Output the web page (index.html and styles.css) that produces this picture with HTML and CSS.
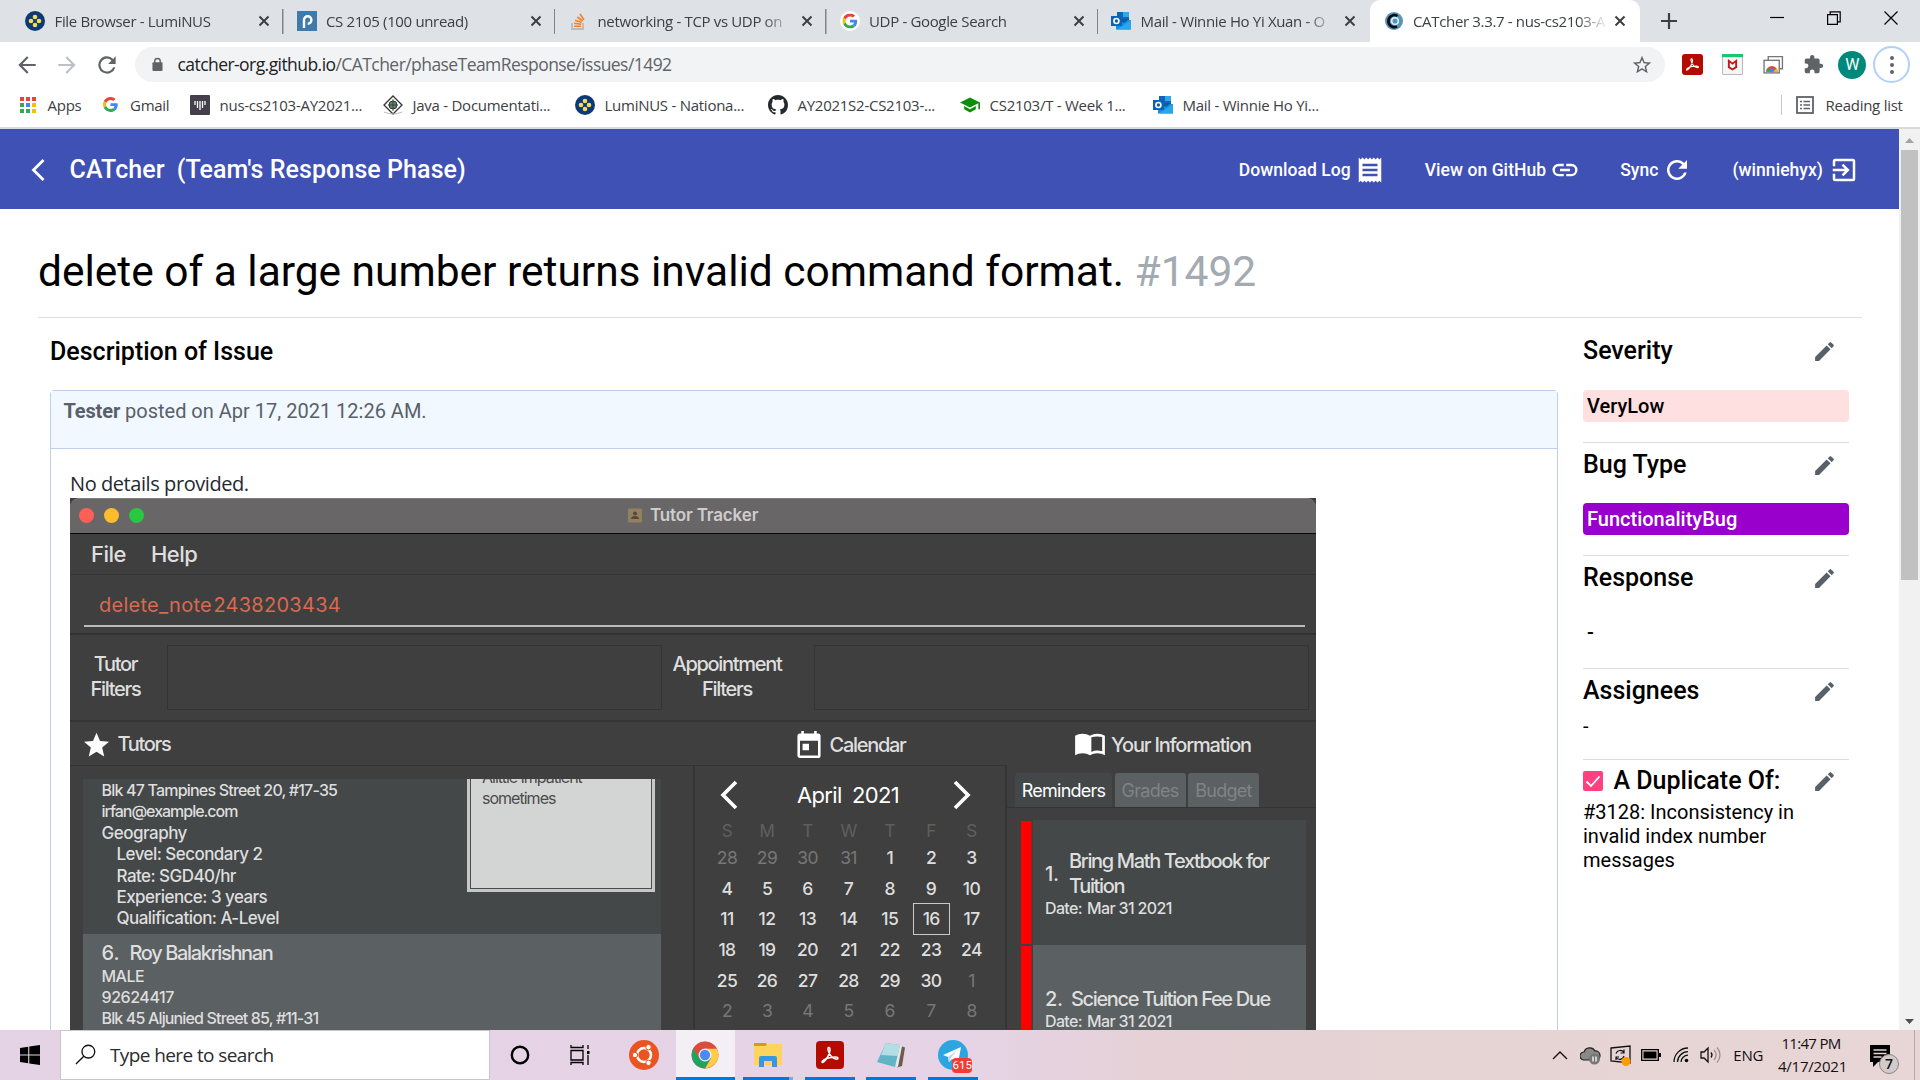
FILE: index.html
```html
<!DOCTYPE html>
<html lang="en">
<head>
<meta charset="utf-8">
<title>CATcher 3.3.7</title>
<link rel="stylesheet" href="styles.css">
</head>
<body>
<svg class="defs" aria-hidden="true">
  <symbol id="luminus" viewBox="0 0 20 20"><circle cx="10" cy="10" r="10" fill="#0b3a75"/><g fill="#f6dc5a"><circle cx="10" cy="6" r="2.3"/><circle cx="10" cy="14" r="2.3"/><circle cx="6" cy="10" r="2.3"/><circle cx="14" cy="10" r="2.3"/></g></symbol>
  <symbol id="google" viewBox="0 0 48 48"><path fill="#ea4335" d="M24 9.5c3.54 0 6.71 1.22 9.21 3.6l6.85-6.85C35.9 2.38 30.47 0 24 0 14.62 0 6.51 5.38 2.56 13.22l7.98 6.19C12.43 13.72 17.74 9.5 24 9.5z"/><path fill="#4285f4" d="M46.98 24.55c0-1.57-.15-3.09-.38-4.55H24v9.02h12.94c-.58 2.96-2.26 5.48-4.78 7.18l7.73 6c4.51-4.18 7.09-10.36 7.09-17.65z"/><path fill="#fbbc05" d="M10.53 28.59a14.5 14.5 0 0 1 0-9.18l-7.98-6.19a24 24 0 0 0 0 21.56l7.98-6.19z"/><path fill="#34a853" d="M24 48c6.48 0 11.93-2.13 15.89-5.81l-7.73-6c-2.15 1.45-4.92 2.3-8.16 2.3-6.26 0-11.57-4.22-13.47-9.91l-7.98 6.19C6.51 42.62 14.62 48 24 48z"/></symbol>
  <symbol id="outlook" viewBox="0 0 20 20"><path fill="#1066b5" d="M6 1h12v10H6z"/><path fill="#32a9e7" d="M12 1h6v5h-6z"/><path fill="#1490df" d="M5 9l15 0v9.500H5z"/><path fill="#28a8ea" d="M20 9v9.500L6 18.500z"/><path fill="#0f5ba0" d="M7 8h11l-5 4z"/><path fill="#0b62b8" d="M0 5h11v10H0z"/><circle cx="5.400" cy="10" r="2.500" fill="none" stroke="#fff" stroke-width="1.600"/></symbol>
  <symbol id="close" viewBox="0 0 12 12"><path d="M1.500 1.500l9 9M10.500 1.500l-9 9" stroke="#3c4043" stroke-width="2" fill="none"/></symbol>
  <symbol id="pencil" viewBox="0 0 24 24"><path fill="#586069" d="M3 17.250V21h3.750L17.810 9.940l-3.750-3.750L3 17.250zM20.710 7.040a1 1 0 0 0 0-1.410l-2.340-2.340a1 1 0 0 0-1.410 0l-1.830 1.830 3.750 3.750 1.830-1.830z"/></symbol>
  <symbol id="acrobat" viewBox="0 0 28 28"><rect width="28" height="28" rx="4" fill="#b30b00"/><path d="M12.500 6.500c2.200-.6 2 4.500-.6 9S6.500 22.500 6 21s3.500-3.500 7.500-4.300 8.500-1 8.500.6-4 .8-6.500-1.800-4.700-8.500-3-9z" fill="none" stroke="#fff" stroke-width="1.500"/></symbol>
</svg>

<div class="tabstrip">
  <div class="tab"><svg class="fav"><use href="#luminus"/></svg><span class="tab-title">File Browser - LumiNUS</span><svg class="x"><use href="#close"/></svg></div>
  <div class="tab"><svg class="fav" viewBox="0 0 20 20"><rect width="20" height="20" fill="#3e7aab"/><path d="M7 17V9a3.700 3.700 0 1 1 3.700 3.700" fill="none" stroke="#fff" stroke-width="2.400"/></svg><span class="tab-title">CS 2105 (100 unread)</span><svg class="x"><use href="#close"/></svg></div>
  <div class="tab"><svg class="fav" viewBox="0 0 20 20"><path d="M4 12v6h11v-6" fill="none" stroke="#bcbbbb" stroke-width="1.800"/><path d="M6 15.300h7M6.200 12.300l7 .9M7.200 9.200l6.500 2.300M9.300 6l5.500 4M12 3l4 5.700" stroke="#f48024" stroke-width="1.600"/></svg><span class="tab-title">networking - TCP vs UDP on</span><svg class="x"><use href="#close"/></svg></div>
  <div class="tab"><svg class="fav" viewBox="0 0 20 20"><circle cx="10" cy="10" r="10" fill="#fff"/><use href="#google" x="2.500" y="2.500" width="15" height="15"/></svg><span class="tab-title">UDP - Google Search</span><svg class="x"><use href="#close"/></svg></div>
  <div class="tab tab-last"><svg class="fav"><use href="#outlook"/></svg><span class="tab-title">Mail - Winnie Ho Yi Xuan - O</span><svg class="x"><use href="#close"/></svg></div>
  <div class="tab tab-active"><svg class="fav" viewBox="0 0 20 20"><circle cx="10" cy="10" r="9" fill="#5795b8"/><path d="M13.500 5A6 6 0 1 0 13 15.500" fill="none" stroke="#0b0b12" stroke-width="2.600"/><circle cx="11" cy="10" r="3.300" fill="none" stroke="#e6f2fa" stroke-width="1.500"/></svg><span class="tab-title">CATcher 3.3.7 - nus-cs2103-A</span><svg class="x"><use href="#close"/></svg></div>
  <svg class="newtab" viewBox="0 0 16 16"><path d="M8 0v16M0 8h16" stroke="#3c4043" stroke-width="2.200"/></svg>
  <div class="winbtns">
    <svg viewBox="0 0 14 14"><path d="M0 6.500h14" stroke="#000" stroke-width="1.200"/></svg>
    <svg viewBox="0 0 14 14"><path d="M.6 3.600h9.800v9.800H.6zM3.200 3.600V.8h10v10h-2.800" fill="none" stroke="#000" stroke-width="1.200"/></svg>
    <svg viewBox="0 0 14 14"><path d="M.5.5l13 13M13.500.5l-13 13" stroke="#000" stroke-width="1.200"/></svg>
  </div>
</div>

<div class="toolbar">
  <svg class="nav" viewBox="0 0 24 24"><path fill="#5f6368" d="M20 11H7.800l5.600-5.600L12 4l-8 8 8 8 1.400-1.400L7.800 13H20z"/></svg>
  <svg class="nav" viewBox="0 0 24 24"><path fill="#bdc1c6" d="M4 11h12.200l-5.600-5.600L12 4l8 8-8 8-1.400-1.400 5.600-5.600H4z"/></svg>
  <svg class="nav" viewBox="0 0 24 24"><path fill="#5f6368" d="M17.650 6.350A8 8 0 1 0 19.730 14h-2.080A6 6 0 1 1 12 6c1.660 0 3.140.69 4.220 1.780L13 11h7V4z"/></svg>
  <div class="omnibox">
    <svg class="lock" viewBox="0 0 12 15"><rect x=".5" y="5" width="11" height="9.500" rx="1" fill="#5f6368"/><path d="M3 6V4a3 3 0 0 1 6 0v2" fill="none" stroke="#5f6368" stroke-width="1.500"/></svg>
    <span class="url"><b>catcher-org.github.io</b>/CATcher/phaseTeamResponse/issues/1492</span>
    <svg class="star" viewBox="0 0 24 24"><path fill="#5f6368" d="M22 9.240l-7.190-.62L12 2 9.190 8.630 2 9.240l5.460 4.730L5.820 21 12 17.270 18.180 21l-1.630-7.030L22 9.240zM12 15.400l-3.760 2.270 1-4.280-3.320-2.880 4.380-.38L12 6.100l1.710 4.040 4.380.38-3.320 2.880 1 4.280L12 15.400z"/></svg>
  </div>
  <div class="exts">
    <svg><use href="#acrobat"/></svg>
    <svg viewBox="0 0 20 20"><rect x=".5" y=".5" width="19" height="19" rx="1" fill="#f6f6f6" stroke="#b9b9b9"/><path fill="#18c96b" d="M0 0h20v3H0z"/><path d="M6.500 6.500v6l3.500 2.200 3.500-2.200v-6L10 9.200z" fill="none" stroke="#c01818" stroke-width="1.800"/></svg>
    <svg viewBox="0 0 20 20"><path d="M5 6V2.500h13.500V14H16" fill="#fff" stroke="#777" stroke-width="1.300"/><rect x="1" y="6" width="14.500" height="12" fill="#fff" stroke="#777" stroke-width="1.300"/><path d="M3 17a5.500 5.500 0 0 1 11 0z" fill="#e94435"/><path d="M3 17a5.500 5.500 0 0 1 1.500-4L8 17z" fill="#34a853"/><path d="M14 17a5.500 5.500 0 0 0-1-3.500L9 17z" fill="#fbbc05"/><circle cx="8.500" cy="15.500" r="2" fill="#4285f4"/></svg>
    <svg viewBox="0 0 24 24"><path fill="#5f6368" d="M20.500 11H19V7a2 2 0 0 0-2-2h-4V3.500a2.500 2.500 0 0 0-5 0V5H4a2 2 0 0 0-2 2v3.800h1.500a2.700 2.700 0 0 1 0 5.400H2V20c0 1.100.9 2 2 2h3.800v-1.500a2.700 2.700 0 0 1 5.400 0V22H17a2 2 0 0 0 2-2v-4h1.500a2.500 2.500 0 0 0 0-5z"/></svg>
    <span class="avatar">W</span>
    <span class="kebab"><i></i><i></i><i></i></span>
  </div>
</div>

<div class="bookmarks">
  <span class="bm bm-apps"><svg viewBox="0 0 16 16"><g fill="#ea4335"><path d="M0 0h4v4H0zM6 0h4v4H6zM12 0h4v4h-4z"/></g><path fill="#34a853" d="M0 6h4v4H0zM0 12h4v4H0z"/><path fill="#4285f4" d="M6 6h4v4H6z"/><path fill="#34a853" d="M6 12h4v4H6z"/><path fill="#fbbc05" d="M12 6h4v4h-4zM12 12h4v4h-4z"/></svg>Apps</span>
  <span class="bm bm-gmail"><svg><use href="#google"/></svg>Gmail</span>
  <span class="bm"><svg viewBox="0 0 20 20"><rect width="20" height="20" rx="1" fill="#443f4a"/><path d="M5 6v4M7.500 6v7M10 6v9M12.500 6v7M15 6v4" stroke="#fff" stroke-width="1.300"/></svg>nus-cs2103-AY2021...</span>
  <span class="bm"><svg viewBox="0 0 20 20"><path d="M10 1l9 9-9 9-9-9z" fill="#fff" stroke="#333" stroke-width="1.300"/><circle cx="10" cy="10" r="4" fill="#5c8a6c" stroke="#333"/><path d="M10 4v12M5 10h10" stroke="#333" stroke-width=".8"/><path d="M1 17q9 4 18 0" stroke="#bbb" fill="none"/></svg>Java - Documentati...</span>
  <span class="bm"><svg><use href="#luminus"/></svg>LumiNUS - Nationa...</span>
  <span class="bm"><svg viewBox="0 0 16 16"><path fill="#24292e" d="M8 0C3.580 0 0 3.580 0 8c0 3.540 2.290 6.530 5.470 7.590.4.070.55-.17.55-.38 0-.19-.01-.82-.01-1.490-2.010.37-2.530-.49-2.690-.94-.09-.23-.48-.94-.82-1.130-.28-.15-.68-.52-.01-.53.63-.01 1.080.58 1.230.82.72 1.210 1.870.87 2.330.66.07-.52.28-.87.51-1.070-1.780-.2-3.640-.89-3.640-3.950 0-.87.31-1.590.82-2.150-.08-.2-.36-1.020.08-2.120 0 0 .67-.21 2.200.82.64-.18 1.320-.27 2-.27s1.360.09 2 .27c1.530-1.040 2.200-.82 2.200-.82.44 1.100.16 1.920.08 2.120.51.56.82 1.270.82 2.150 0 3.070-1.870 3.750-3.650 3.950.29.25.54.73.54 1.480 0 1.070-.01 1.930-.01 2.200 0 .21.15.46.55.38A8.010 8.010 0 0 0 16 8c0-4.420-3.580-8-8-8z"/></svg>AY2021S2-CS2103-...</span>
  <span class="bm"><svg viewBox="0 0 24 24"><path fill="#0a8f0a" d="M5 13.200v4L12 21l7-3.800v-4L12 17zM12 3L0 9l12 6 10-5v7h2V9z"/></svg>CS2103/T - Week 1...</span>
  <span class="bm"><svg><use href="#outlook"/></svg>Mail - Winnie Ho Yi...</span>
  <span class="bm reading"><svg viewBox="0 0 18 18"><rect x="1" y="1" width="16" height="16" fill="none" stroke="#5f6368" stroke-width="1.800"/><path d="M4 5.500h2M4 9h2M4 12.500h2M7.500 5.500H14M7.500 9H14M7.500 12.500H14" stroke="#5f6368" stroke-width="1.600"/></svg>Reading list</span>
</div>

<div class="viewport">
  <div class="page">
    <header class="appbar">
      <svg class="back" viewBox="0 0 14 22"><path d="M12.500 1L2.500 11l10 10" fill="none" stroke="#fff" stroke-width="2.800"/></svg>
      <span class="brand">CATcher</span><span class="phase">(Team's Response Phase)</span>
      <nav class="actions">
        <span class="action">Download Log<svg viewBox="0 0 24 24"><path fill="#fff" d="M18 17H6v-2h12v2zm0-4H6v-2h12v2zm0-4H6V7h12v2zM3 22l1.500-1.500L6 22l1.500-1.500L9 22l1.500-1.500L12 22l1.500-1.500L15 22l1.500-1.500L18 22l1.500-1.500L21 22V2l-1.500 1.500L18 2l-1.500 1.500L15 2l-1.500 1.500L12 2l-1.500 1.500L9 2 7.500 3.500 6 2 4.500 3.500 3 2v20z"/></svg></span>
        <span class="action">View on GitHub<svg viewBox="0 0 24 24"><path fill="#fff" d="M3.900 12A3.100 3.100 0 0 1 7 8.900h4V7H7a5 5 0 0 0 0 10h4v-1.900H7A3.100 3.100 0 0 1 3.900 12zM8 13h8v-2H8v2zm9-6h-4v1.900h4a3.100 3.100 0 0 1 0 6.200h-4V17h4a5 5 0 0 0 0-10z"/></svg></span>
        <span class="action">Sync<svg viewBox="0 0 24 24"><path fill="#fff" d="M17.650 6.350A8 8 0 1 0 19.730 14h-2.080A6 6 0 1 1 12 6c1.660 0 3.140.69 4.220 1.780L13 11h7V4z"/></svg></span>
        <span class="action last">(winniehyx)<svg viewBox="0 0 24 24"><path fill="#fff" d="M10.090 15.590L11.500 17l5-5-5-5-1.410 1.410L12.670 11H3v2h9.670l-2.580 2.590zM19 3H5a2 2 0 0 0-2 2v4h2V5h14v14H5v-4H3v4a2 2 0 0 0 2 2h14a2 2 0 0 0 2-2V5a2 2 0 0 0-2-2z"/></svg></span>
      </nav>
    </header>

    <h1 class="title">delete of a large number returns invalid command format. <span>#1492</span></h1>

    <div class="columns">
      <main class="issue">
        <h2>Description of Issue</h2>
        <article class="comment">
          <div class="comment-head"><strong>Tester</strong> posted on Apr 17, 2021 12:26 AM.</div>
          <div class="comment-body">
            <p>No details provided.</p>

            <div class="tracker">
              <div class="mac-bar">
                <span class="lights"><i class="red"></i><i class="yellow"></i><i class="green"></i></span>
                <span class="mac-title"><svg viewBox="0 0 14 14"><rect width="14" height="14" rx="1" fill="#93805e"/><circle cx="7" cy="5" r="2" fill="#54493a"/><path d="M3 10.500q0-3 4-3t4 3z" fill="#54493a"/></svg>Tutor Tracker</span>
              </div>
              <div class="menu"><span>File</span><span>Help</span></div>
              <div class="cmd"><div class="cmd-input">delete_note 2438203434</div></div>
              <div class="filters">
                <span class="flabel">Tutor<br>Filters</span><span class="fbox"></span>
                <span class="flabel wide">Appointment<br>Filters</span><span class="fbox"></span>
              </div>
              <div class="panes">
                <section class="pane pane-tutors">
                  <div class="pane-head"><svg viewBox="2 2 20 19"><path fill="#fff" d="M12 17.270L18.180 21l-1.640-7.030L22 9.240l-7.190-.61L12 2 9.190 8.630 2 9.240l5.460 4.730L5.820 21z"/></svg>Tutors</div>
                  <div class="list">
                    <div class="tutor">
                      <div class="lines">
                        <div class="t1">Blk 47 Tampines Street 20, #17-35</div>
                        <div class="t2">irfan@example.com</div>
                        <div class="t2 big">Geography</div>
                        <div class="sub">Level: Secondary 2</div>
                        <div class="sub">Rate: SGD40/hr</div>
                        <div class="sub">Experience: 3 years</div>
                        <div class="sub">Qualification: A-Level</div>
                      </div>
                      <div class="note"><div>Alittle impatient<br>sometimes</div></div>
                    </div>
                    <div class="tutor alt">
                      <div class="lines">
                        <div class="name"><span>6.</span>Roy Balakrishnan</div>
                        <div class="t1 male">MALE</div>
                        <div class="t1 num">92624417</div>
                        <div class="t1 addr">Blk 45 Aljunied Street 85, #11-31</div>
                      </div>
                    </div>
                  </div>
                </section>
                <section class="pane pane-cal">
                  <div class="pane-head"><svg viewBox="3 1 18 21"><path fill="#fff" d="M19 3h-1V1h-2v2H8V1H6v2H5a2 2 0 0 0-2 2v15c0 1.100.9 2 2 2h14a2 2 0 0 0 2-2V5a2 2 0 0 0-2-2zm0 17H5V8.500h14V20zM7 11h5v5H7z"/></svg>Calendar</div>
                  <div class="cal-body">
                  <div class="month"><svg viewBox="0 0 18 30"><path d="M16 2L3 15l13 13" fill="none" stroke="#fff" stroke-width="3.600"/></svg><span>April 2021</span><svg viewBox="0 0 18 30"><path d="M2 2l13 13L2 28" fill="none" stroke="#fff" stroke-width="3.600"/></svg></div>
                  <div class="days">
                    <b>S</b><b>M</b><b>T</b><b>W</b><b>T</b><b>F</b><b>S</b>
                    <i>28</i><i>29</i><i>30</i><i>31</i><span>1</span><span>2</span><span>3</span>
                    <span>4</span><span>5</span><span>6</span><span>7</span><span>8</span><span>9</span><span>10</span>
                    <span>11</span><span>12</span><span>13</span><span>14</span><span>15</span><span class="today">16</span><span>17</span>
                    <span>18</span><span>19</span><span>20</span><span>21</span><span>22</span><span>23</span><span>24</span>
                    <span>25</span><span>26</span><span>27</span><span>28</span><span>29</span><span>30</span><i>1</i>
                    <i>2</i><i>3</i><i>4</i><i>5</i><i>6</i><i>7</i><i>8</i>
                  </div>
                  </div>
                </section>
                <section class="pane pane-info">
                  <div class="pane-head"><svg viewBox="1 4 22 17"><path fill="#fff" d="M12 6C10.500 5 8.500 4.500 6.500 4.500S2.500 5 1 6v14.500C2.500 19.500 4.500 19 6.500 19s4 .5 5.500 1.500c1.500-1 3.500-1.500 5.500-1.500s4 .5 5.500 1.500V6c-1.500-1-3.500-1.500-5.500-1.500S13.500 5 12 6zm9 11.500c-1.100-.35-2.300-.5-3.500-.5s-3.200.3-4.500 1V7.200c1.300-.5 2.800-.7 4.500-.7 1.200 0 2.400.15 3.500.5z"/></svg>Your Information</div>
                  <div class="tabs"><span class="on">Reminders</span><span>Grades</span><span>Budget</span></div>
                  <div class="reminders">
                    <div class="rem">
                      <div class="rem-card"><div class="rem-row"><span class="n">1.</span><span>Bring Math Textbook for Tuition</span></div><div class="date"><span>Date:</span>Mar 31 2021</div></div>
                    </div>
                    <div class="rem rem-alt">
                      <div class="rem-card"><div class="rem-row"><span class="n">2.</span><span>Science Tuition Fee Due</span></div><div class="date"><span>Date:</span>Mar 31 2021</div></div>
                    </div>
                  </div>
                </section>
              </div>
            </div>
          </div>
        </article>
      </main>

      <aside class="side">
        <section class="sev"><h3>Severity<svg><use href="#pencil"/></svg></h3><div class="label low">VeryLow</div></section>
        <section><h3>Bug Type<svg><use href="#pencil"/></svg></h3><div class="label bug">FunctionalityBug</div></section>
        <section><h3>Response<svg><use href="#pencil"/></svg></h3><div class="label none">-</div></section>
        <section class="assign"><h3>Assignees<svg><use href="#pencil"/></svg></h3><div>-</div></section>
        <section class="dup"><h3><span class="check"><svg viewBox="0 0 20 20"><path d="M3.500 10.500l4.500 4.500L16.500 5.500" fill="none" stroke="#fff" stroke-width="1.800"/></svg></span>A Duplicate Of:<svg><use href="#pencil"/></svg></h3><p>#3128: Inconsistency in invalid index number messages</p></section>
      </aside>
    </div>
  </div>
  <div class="scrollbar"><svg viewBox="0 0 9 5"><path d="M0 5l4.500-5L9 5z" fill="#a3a3a3"/></svg><div class="thumb"></div><svg class="down" viewBox="0 0 9 5"><path d="M0 0l4.500 5L9 0z" fill="#505050"/></svg></div>
</div>

<div class="taskbar">
  <div class="start"><svg viewBox="0 0 20 20"><path d="M0 3l8.200-1.200v7.700H0zM9.300 1.600L20 0v9.500H9.300zM0 10.600h8.200v7.700L0 17.100zM9.300 10.600H20V20L9.300 18.500z"/></svg></div>
  <div class="search"><svg viewBox="0 0 22 22"><circle cx="14" cy="8" r="6.700" fill="none" stroke="#111" stroke-width="1.400"/><path d="M9.200 12.800L1 21" stroke="#111" stroke-width="1.400"/></svg><span>Type here to search</span></div>
  <div class="apps">
    <span><svg class="s20" viewBox="0 0 20 20"><circle cx="10" cy="10" r="8.200" fill="none" stroke="#000" stroke-width="2.400"/></svg></span>
    <span class="tv"><svg class="s20" viewBox="0 0 20 20"><path d="M1 5.500h12v9.500H1zM1 0v2.500h12V0M1 20v-2.500h12V20M18 0v4M18 10v10" fill="none" stroke="#000" stroke-width="1.300"/><path d="M17 6h2.500v3H17z"/></svg></span>
    <span><svg class="s30" viewBox="0 0 30 30"><circle cx="15" cy="15" r="15" fill="#e95420"/><circle cx="15" cy="15" r="7" fill="none" stroke="#fff" stroke-width="2.600"/><g fill="#fff" stroke="#e95420" stroke-width="1"><circle cx="6" cy="15" r="2.700"/><circle cx="19.500" cy="7.200" r="2.700"/><circle cx="19.500" cy="22.800" r="2.700"/></g></svg></span>
    <span class="open active"><svg class="s28" viewBox="0 0 48 48"><circle cx="24" cy="24" r="23" fill="#dd4b3e"/><path d="M4.100 12.500A23 23 0 0 0 24 47l10-17.500H14z" fill="#1ea362"/><path d="M24 47A23 23 0 0 0 44 13H24l10 17z" fill="#ffce44"/><path d="M24 13h20A23 23 0 0 0 4.100 12.500l10 17z" fill="#dd4b3e"/><circle cx="24" cy="24" r="11" fill="#f1f1f1"/><circle cx="24" cy="24" r="8.800" fill="#4c8bf5"/></svg></span>
    <span class="open multi"><svg class="s28" viewBox="0 0 28 28"><path fill="#d99a12" d="M0 2h12l2 4H0z"/><path fill="#ffd45c" d="M0 5h11l3-2h14v21H0z"/><path fill="#3a96dd" d="M5 26v-9a2 2 0 0 1 2-2h14a2 2 0 0 1 2 2v9h-5v-6h-8v6z"/></svg></span>
    <span class="open"><svg class="s28"><use href="#acrobat"/></svg></span>
    <span class="open"><svg class="s28" viewBox="0 0 28 28"><path fill="#6b5b4a" d="M24 5l4 1.500L25 25l-5 1.500z"/><path fill="#e8e8e8" d="M21 4l4 1-4 21-5-2z"/><path fill="#63b3c6" d="M9 2l14 2-5 22L0 21z"/><path fill="#b5dde6" d="M9 2l14 2-2.500 11L4 14z"/></svg></span>
    <span class="open"><svg class="s30" viewBox="0 0 30 30"><circle cx="15" cy="15" r="15" fill="#2ca5e0"/><path fill="#fff" d="M5 15l18-8-3 16-6-4-3 3-1-5z"/><path fill="#b9d9ec" d="M10 17l9-6.500-6 7-2 4.500z"/></svg><em>615</em></span>
  </div>
  <div class="tray">
    <svg class="t-caret" viewBox="0 0 16 10"><path d="M1 9l7-7 7 7" fill="none" stroke="#111" stroke-width="1.400"/></svg>
    <svg class="t-cloud" viewBox="0 0 21 19"><path d="M4 14a4 4 0 0 1 0-8 6 6 0 0 1 11-1 4.500 4.500 0 0 1 1 9z" fill="#8b8888" stroke="#222" stroke-width="1.200"/><circle cx="14.500" cy="13" r="5.500" fill="#777"/><path d="M13 10.500v5M16 10.500v5" stroke="#fff" stroke-width="1.300"/></svg>
    <svg class="t-upd" viewBox="0 0 21 21"><path d="M1 3l19-2v17L1 16z" fill="none" stroke="#111" stroke-width="1.300"/><path d="M6 8.500a4.500 4.500 0 0 1 8-1M14 4.500v3.500h-3.500M14 11a4.500 4.500 0 0 1-8 1.500M6 15v-3h3" fill="none" stroke="#111" stroke-width="1.200"/><circle cx="16" cy="16.500" r="4.500" fill="#ff9a00"/></svg>
    <svg class="t-bat" viewBox="0 0 20 12"><path d="M.7.7h16.600v10.600H.7z" fill="none" stroke="#000" stroke-width="1.300"/><path d="M2.500 2.500h13v7h-13zM18 4h2v4h-2z"/></svg>
    <svg class="t-wifi" viewBox="0 0 16 16"><path d="M1 15A14 14 0 0 1 15 1M4.500 15A10.500 10.500 0 0 1 15 4.700M8 15a7 7 0 0 1 7-6.800" fill="none" stroke="#111" stroke-width="1.300"/><circle cx="13.500" cy="13.500" r="1.800"/></svg>
    <svg class="t-vol" viewBox="0 0 21 18"><path d="M1 6h3l4-4v14l-4-4H1z" fill="none" stroke="#111" stroke-width="1.300"/><path d="M11 6.500a4 4 0 0 1 0 5" fill="none" stroke="#111" stroke-width="1.300"/><path d="M14 4a7 7 0 0 1 0 10M17 1.500a11 11 0 0 1 0 15" fill="none" stroke="#9b8f90" stroke-width="1.300"/></svg>
    <span class="lang">ENG</span>
    <span class="clock"><span class="time">11:47 PM</span><span class="day">4/17/2021</span></span>
    <span class="notif"><svg viewBox="0 0 21 22"><path d="M0 0h20v17H8l-5 5v-5H0z"/><path d="M3.500 5h13M3.500 8.500h13M3.500 12h8" stroke="#e6d3d3" stroke-width="1.300"/></svg><em>7</em></span>
  </div>
</div>
</body>
</html>
```
FILE: styles.css
```css
* { box-sizing: border-box; }
body { margin: 0; width: 1920px; height: 1080px; overflow: hidden; display: flex; flex-direction: column; background: #fff; font-family: Roboto, sans-serif; color: #000; }
svg { display: block; flex: none; }
h1, h2, h3, p { margin: 0; }
.defs { position: absolute; width: 0; height: 0; }

/* browser tabs */
.tabstrip { flex: none; height: 42px; background: #dee1e6; display: flex; padding-left: 12px; font: 15px/41px "Open Sans", sans-serif; letter-spacing: -.34px; color: #3c4043; }
.tab { width: 271.500px; display: flex; align-items: center; padding: 0 13.500px 0 13px; background: linear-gradient(#80868b, #80868b) right 9px / 1.500px 25px no-repeat; }
.tab-last { width: 271.500px; background: none; }
.tab-active { width: 270px; background: #fff; border-radius: 10px 10px 0 0; padding-left: 14px; }
.fav { width: 20px; height: 20px; margin-right: 9.500px; }
.tab-title { width: 192px; white-space: nowrap; margin-right: auto; mask-image: linear-gradient(90deg, #000 165px, rgba(0, 0, 0, .15) 190px); }
.x { width: 12px; height: 12px; }
.newtab { width: 16px; height: 16px; margin: 13px 0 0 21px; }
.winbtns { margin-left: auto; display: flex; gap: 43px; padding: 11px 22px 0 0; }
.winbtns svg { width: 14px; height: 14px; }

.toolbar { flex: none; height: 45px; display: flex; align-items: center; padding-left: 14px; }
.nav { width: 26px; height: 26px; margin-right: 14px; }
.omnibox { width: 1530px; height: 35px; border-radius: 18px; background: #f1f3f4; display: flex; align-items: center; padding: 0 12px 0 17px; margin-left: 1px; }
.lock { width: 11px; height: 15px; margin-right: 14.500px; }
.url { font: 17.500px/35px "Open Sans", sans-serif; letter-spacing: -.56px; color: #5f6368; flex: 1; }
.url b { font-weight: 400; color: #202124; }
.star { width: 22px; height: 22px; }
.exts { display: flex; align-items: center; margin-left: 17px; flex: none; }
.exts svg { width: 21px; height: 21px; margin-right: 19.300px; }
.exts svg:nth-child(4) { margin-right: 14.500px; }
.avatar { width: 28px; height: 28px; border-radius: 50%; background: #00897b; color: #fff; font: 16px/28px Roboto, sans-serif; text-align: center; }
.kebab { width: 37px; height: 37px; margin-left: 7px; border: 2.500px solid #b3d0f8; border-radius: 50%; display: flex; flex-direction: column; align-items: center; justify-content: center; gap: 3px; }
.kebab i { width: 4px; height: 4px; border-radius: 50%; background: #5f6368; }

.bookmarks { flex: none; height: 42px; border-bottom: 2px solid #d8dadd; display: grid; grid-template-columns: 83px 87px 193px 192px 193px 192px 193px 628px 1fr; padding-left: 19.500px; font: 15px/34px "Open Sans", sans-serif; letter-spacing: -.26px; color: #3c4043; }
.bm { display: flex; align-items: center; height: 35px; white-space: nowrap; }
.bm svg { width: 20px; height: 20px; margin-right: 10px; }
.bm-apps svg { width: 16px; height: 16px; margin-right: 12px; }
.bm-gmail svg { width: 15px; height: 15px; margin-right: 12.500px; }
.bm.reading { height: 20px; margin-top: 8px; padding-left: 14px; border-left: 1px solid #c4c7ca; }
.reading svg { width: 18px; height: 18px; margin-right: 12px; }

/* page */
.viewport { flex: none; height: 901px; display: flex; overflow: hidden; }
.page { width: 1899px; height: 901px; overflow: hidden; }
.scrollbar { width: 21px; background: #f1f1f1; display: flex; flex-direction: column; align-items: center; padding: 9px 0 6px; }
.scrollbar svg { width: 9px; height: 5px; }
.scrollbar .thumb { width: 17px; height: 430px; background: #c1c1c1; margin-top: 7px; }
.scrollbar .down { margin-top: auto; }
.appbar { height: 80px; background: #3f51b5; color: #fff; display: flex; align-items: center; padding: 1px 40px 0 31px; font-weight: 500; }
.back { width: 14px; height: 22px; margin-right: 24.500px; }
.brand, .phase { font-size: 25px; letter-spacing: .08px; }
.brand { margin-right: 12px; }
.actions { margin-left: auto; display: flex; gap: 40px; }
.action { display: flex; align-items: center; font-size: 17.500px; letter-spacing: .05px; }
.action svg { width: 30px; height: 30px; margin-left: 4px; }
.action.last svg { margin-left: 6px; }
.title { height: 109px; margin: 0 37px 0 38px; padding-top: 38px; border-bottom: 1px solid #dedfe1; font: 400 42.500px/50px Roboto, sans-serif; letter-spacing: -.02px; }
.title span { color: #a3aab1; }
.columns { display: flex; padding-left: 50px; }
.issue { width: 1508px; }
.issue h2 { font: 500 25px/29px Roboto, sans-serif; margin-top: 18.500px; }
.comment { margin-top: 24.500px; border: 1px solid #bdd0ea; border-radius: 4px 4px 0 0; height: 700px; }
.comment-head { height: 58px; background: #f1f8ff; border-bottom: 1px solid #bdd0ea; padding: 6px 0 0 12.500px; font-size: 20px; line-height: 29px; color: #586069; }
.comment-head strong { letter-spacing: -.15px; }
.comment-body { padding: 20px 0 0 19px; }
.comment-body p { font: 20px/29px "Open Sans", sans-serif; letter-spacing: -.43px; color: #24292e; }

.side { width: 266px; margin-left: 25px; padding-top: 11px; }
.side section { height: 113px; border-bottom: 1px solid #dcdddf; padding-top: 7px; font-size: 20px; }
.side .sev { height: 114px; }
.side h3 { display: flex; align-items: center; font: 500 25px/29px Roboto, sans-serif; height: 29px; }
.side h3 > svg { width: 25px; height: 25px; margin: 2px 12.500px 0 auto; }
.side .label { margin-top: 24px; height: 32px; line-height: 32px; border-radius: 4px; padding-left: 4px; font-weight: 500; }
.side .low { margin-top: 25px; }
.low { background: #ffe0e0; }
.bug { background: #9900cc; color: #fff; }
.side .assign { height: 91px; }
.assign div { margin-top: 9px; line-height: 24px; }
.side .dup { border: 0; padding-top: 6px; }
.dup p { line-height: 24px; margin-top: 5px; letter-spacing: 0; }
.check { width: 20px; height: 20px; border-radius: 2px; background: #ff4081; margin-right: 10.500px; }

/* Tutor Tracker window */
.tracker { width: 1246px; background: #3f3f3f; font: 500 20px Inter, sans-serif; color: #dedede; }
.mac-bar { height: 36px; background: #696667; border-top: 1px solid #807d7e; border-bottom: 1px solid #0a0a0a; border-radius: 9px 9px 0 0; display: grid; grid-template-columns: 558px auto; align-items: center; padding-bottom: 2px; }
.lights { display: flex; gap: 10px; padding-left: 8.500px; }
.lights i { width: 15px; height: 15px; border-radius: 50%; }
.red { background: #ff5f57; } .yellow { background: #febb2e; } .green { background: #28c840; }
.mac-title { display: flex; align-items: center; font-size: 17px; font-weight: 600; letter-spacing: -.15px; color: #cfcccd; height: 32px; }
.mac-title svg { width: 14px; height: 15px; margin-right: 8px; }
.menu { height: 41px; border-bottom: 1.500px solid #353535; display: flex; gap: 25px; padding: 0 0 1px 21px; align-items: center; font-size: 22px; letter-spacing: -.5px; }
.cmd { height: 60px; border-bottom: 2px solid #323232; padding: 9px 11px 0 14px; }
.cmd-input { height: 43px; border-bottom: 2px solid #b9bbbb; padding-left: 15px; font: 400 20px/42px Inter, sans-serif; letter-spacing: .27px; word-spacing: -4.500px; color: #d9694f; }
.filters { height: 87px; border-bottom: 2px solid #353535; display: flex; padding-top: 10px; }
.flabel { width: 91px; margin-right: 6px; text-align: center; line-height: 25px; padding-top: 7px; letter-spacing: -1.300px; }
.flabel.wide { width: 130px; margin-right: 22px; }
.fbox { width: 495px; height: 65px; border: 1.500px solid #343434; }
.panes { display: flex; height: 308px; }
.pane-head { height: 44px; display: flex; align-items: center; padding-top: 1px; letter-spacing: -1.300px; }
.pane-tutors { width: 624px; }
.pane-tutors .pane-head { padding-left: 14px; border-bottom: 1.500px solid #343434; }
.pane-tutors .pane-head svg { width: 25px; height: 25px; margin-right: 8.500px; }
.list { margin: 13px 33px 0 12.500px; }
.tutor { width: 578.500px; height: 155px; background: #444849; display: flex; justify-content: space-between; padding-left: 19px; font: 500 16px/21.400px Inter, sans-serif; }
.tutor .lines { padding-top: 1px; }
.tutor.alt { height: 97px; background: #5b6062; padding-top: 7px; }
.t1 { letter-spacing: -.8px; }
.t2 { letter-spacing: -1.020px; }
.big { font-size: 17px; letter-spacing: -.5px; }
.male { letter-spacing: -.5px; }
.num { letter-spacing: -.45px; }
.addr { letter-spacing: -.85px; }
.sub { padding-left: 15px; font-size: 17px; letter-spacing: -.55px; }
.name { font-size: 20px; line-height: 23.500px; letter-spacing: -1.350px; }
.name span { display: inline-block; width: 28px; letter-spacing: 0; }
.note { width: 188px; height: 113px; margin-right: 6px; padding: 0 3px 3px; background: #c6c8c8; }
.note div { height: 110px; background: #d3d5d4; border: 1.500px solid #4a4c4c; border-top: 0; padding-left: 11px; color: #4b4b4b; font-weight: 400; letter-spacing: -.98px; line-height: 21px; overflow: hidden; }
.note div::before { content: ""; display: block; margin-top: -12px; }
.pane-cal { width: 314px; margin-left: -1px; }
.pane-cal .pane-head { justify-content: center; padding-left: 2px; }
.cal-body { height: 264px; border: solid #343434; border-width: 1.500px 2px 0; margin-top: -1px; }
.pane-cal svg { width: 24px; height: 27px; margin-right: 9px; }
.month { height: 53px; display: flex; justify-content: space-between; align-items: center; padding: 5px 34px 0 25px; font-size: 22px; font-weight: 400; letter-spacing: -.7px; word-spacing: 5px; color: #fff; }
.month span { margin-left: 5px; }
.month svg { width: 18px; height: 30px; margin: 0; }
.days { display: grid; grid-template-columns: 40px 40px 41px 41px 41.500px 41px 40px; grid-template-rows: 24px repeat(6, 30.700px); margin-left: 12px; text-align: center; font: 500 17.500px/30.700px Inter, sans-serif; letter-spacing: -.6px; }
.days b { font: 400 17px/24px Inter, sans-serif; color: #5f5f5f; }
.days i { font-style: normal; font-weight: 400; color: #777; }
.today { border: 1.500px solid #c9c9c9; margin: -1.500px 1.500px 0 2px; line-height: 30px; }
.pane-info { width: 309px; }
.pane-info .pane-head { justify-content: center; padding-left: 3px; letter-spacing: -1.200px; }
.pane-info .pane-head svg { width: 30px; height: 23px; margin-right: 6px; }
.tabs { display: flex; padding: 7px 0 0 8px; gap: 2.500px; border-bottom: 1.500px solid #343434; font: 400 18px/35px Inter, sans-serif; letter-spacing: -.75px; }
.tabs span { height: 34px; width: 71px; background: #5b6062; color: #808485; text-align: center; border-radius: 3px 3px 0 0; }
.tabs .on { width: 97px; background: #434748; color: #fff; }
.reminders { padding: 12px 10px 0 14px; }
.rem { height: 125px; padding-left: 12px; background: linear-gradient(#f00, #f00) 0 1px / 10.500px 123px no-repeat; }
.rem-card { height: 125px; background: #444849; padding: 29px 0 0 12px; }
.rem-alt .rem-card { background: #5b6062; padding-top: 42px; }
.rem-row { display: flex; align-items: center; font: 500 20px/25px Inter, sans-serif; letter-spacing: -1.350px; }
.rem-row .n { width: 24px; flex: none; letter-spacing: -.4px; }
.rem-row span:last-child { white-space: normal; width: 215px; }
.rem-alt .n { width: 26px; }
.date { font: 500 16px/20px Inter, sans-serif; letter-spacing: -.65px; margin-top: -1px; }
.date span { display: inline-block; width: 42px; }

/* taskbar */
.taskbar { flex: none; height: 50px; display: flex; background: linear-gradient(90deg, #e4d2e5 0, #e6d3e6 50%, #e5d1d6 60%, #e6d3d3 75%, #e8d5d5); }
.start { width: 60px; padding: 15px 0 0 20px; }
.start svg { width: 20px; height: 20px; }
.search { width: 430px; background: #fff; border: 1px solid #c9c5ca; display: flex; align-items: center; padding: 0 0 1px 14px; font: 19px "Open Sans", sans-serif; letter-spacing: -.6px; color: #2b2b2b; }
.search svg { width: 21px; height: 21px; margin-right: 14px; }
.apps { display: flex; margin-left: -1px; }
.apps > span { width: 61.900px; height: 50px; display: flex; align-items: center; justify-content: center; }
.apps > .tv { padding-right: 3px; }
.apps .open { background: linear-gradient(#0078d7, #0078d7) center bottom / 50px 3px no-repeat; position: relative; }
.apps .active { width: 59px; background: linear-gradient(#0078d7, #0078d7) center bottom / 59px 3px no-repeat #f4eef5; margin: 0 2px 0 1px; }
.apps .multi { background: linear-gradient(90deg, #0078d7 46px, #6cb0e6 46px) center bottom / 50px 3px no-repeat; }
.s20 { width: 20px; height: 20px; }
.s28 { width: 28px; height: 28px; }
.s30 { width: 30px; height: 30px; }
.apps em { position: absolute; right: 12px; top: 28px; height: 15px; width: 20px; border-radius: 4px; background: #f23c34; color: #fff; font: 11.500px/15px Roboto, sans-serif; text-align: center; }
.tray { margin-left: auto; display: flex; align-items: center; padding-right: 5px; font: 15px/23px "Open Sans", sans-serif; color: #111; }
.t-caret { width: 16px; height: 10px; margin-right: 12px; }
.t-cloud { width: 21px; height: 19px; margin-right: 9px; }
.t-upd { width: 21px; height: 21px; margin-right: 10px; }
.t-bat { width: 20px; height: 12px; margin-right: 12px; }
.t-wifi { width: 16px; height: 16px; margin-right: 11px; }
.t-vol { width: 21px; height: 18px; margin-right: 12px; }
.lang { letter-spacing: -.3px; margin-right: 15px; }
.clock { width: 69px; display: flex; flex-direction: column; align-items: center; margin-right: 23px; }
.time { letter-spacing: -.7px; padding-right: 3px; }
.day { letter-spacing: -.2px; }
.notif { position: relative; width: 45px; height: 50px; padding-top: 15px; border-right: 1px solid #b5a7a8; }
.notif svg { width: 21px; height: 22px; }
.notif em { position: absolute; left: 9px; top: 24px; width: 20px; height: 20px; border-radius: 50%; background: #d3cbcb; border: 1px solid #8d8585; font: 600 14px/18px "Open Sans", sans-serif; text-align: center; }
```
